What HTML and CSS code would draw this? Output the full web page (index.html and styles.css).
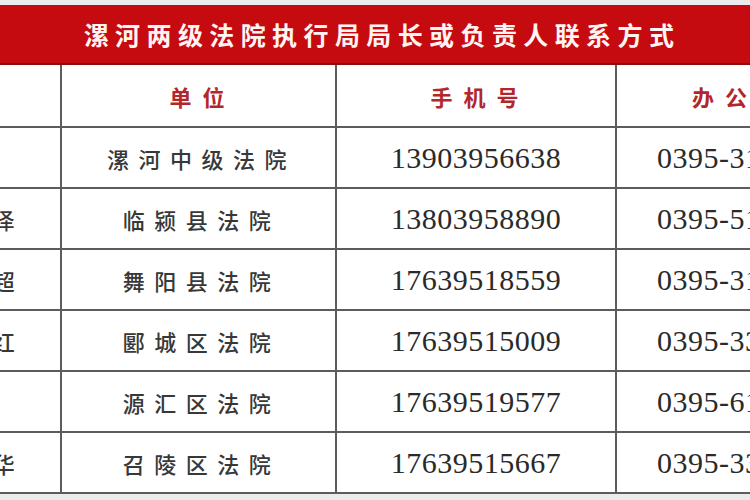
FILE: index.html
```html
<!DOCTYPE html>
<html lang="zh-CN">
<head>
<meta charset="utf-8">
<title>漯河两级法院执行局局长或负责人联系方式</title>
<link rel="stylesheet" href="styles.css">
</head>
<body>
<div class="page">
  <div class="banner">漯河两级法院执行局局长或负责人联系方式</div>
  <div class="sheet">
    <table class="grid">
      <colgroup>
        <col class="c-name">
        <col class="c-unit">
        <col class="c-mobile">
        <col class="c-office">
      </colgroup>
      <thead>
        <tr>
          <th>姓名</th>
          <th>单位</th>
          <th>手机号</th>
          <th>办公电话</th>
        </tr>
      </thead>
      <tbody>
        <tr><td class="cn">王伟</td><td class="cn">漯河中级法院</td><td class="num">13903956638</td><td class="num">0395-3116621</td></tr>
        <tr><td class="cn">李春泽</td><td class="cn">临颍县法院</td><td class="num">13803958890</td><td class="num">0395-5120021</td></tr>
        <tr><td class="cn">刘国超</td><td class="cn">舞阳县法院</td><td class="num">17639518559</td><td class="num">0395-3186502</td></tr>
        <tr><td class="cn">张振红</td><td class="cn">郾城区法院</td><td class="num">17639515009</td><td class="num">0395-3379618</td></tr>
        <tr><td class="cn">陈刚</td><td class="cn">源汇区法院</td><td class="num">17639519577</td><td class="num">0395-6168016</td></tr>
        <tr><td class="cn">赵建华</td><td class="cn">召陵区法院</td><td class="num">17639515667</td><td class="num">0395-3375522</td></tr>
      </tbody>
    </table>
  </div>
</div>
</body>
</html>
```

FILE: styles.css
```css
html, body {
  margin: 0;
  padding: 0;
}

body {
  background: #ebebeb;
  width: 750px;
  height: 500px;
  overflow: hidden;
  font-family: "Noto Sans CJK SC", "Noto Sans", sans-serif;
}

.page {
  padding-top: 5px;
}

.banner {
  height: 58px;
  background: #c50a10;
  border-bottom: 2px solid #8e0b0d;
  color: #fff4f2;
  font-family: "Noto Sans CJK SC", sans-serif;
  font-weight: 700;
  font-size: 25px;
  letter-spacing: 6.4px;
  line-height: 58px;
  text-align: center;
  padding-left: 14px;
}

.sheet {
  width: 750px;
  overflow: hidden;
  background: #ffffff;
}

.grid {
  margin-left: -114px;
  table-layout: fixed;
  border-collapse: collapse;
  width: 1029px;
}

.c-name { width: 174px; }
.c-unit { width: 275px; }
.c-mobile { width: 280px; }
.c-office { width: 300px; }

.grid th,
.grid td {
  border: 2px solid #5c5c5c;
  text-align: center;
  padding: 0;
  white-space: nowrap;
}

.grid thead tr {
  height: 62px;
}

.grid thead th {
  border-top: none;
  color: #b3262a;
  font-family: "Noto Sans CJK SC", sans-serif;
  font-weight: 700;
  font-size: 22px;
  letter-spacing: 11px;
  padding-left: 8px;
}

.grid tbody tr {
  height: 61px;
}

.grid td.cn {
  color: #383838;
  font-family: "Noto Sans CJK SC", sans-serif;
  font-weight: 500;
  font-size: 22px;
  letter-spacing: 9.5px;
  padding-left: 6px;
}

.grid td.num {
  color: #2a2a2a;
  font-family: "Liberation Serif", "Times New Roman", serif;
  font-size: 30px;
  letter-spacing: 0.5px;
}

.grid td.num:last-child {
  text-align: left;
  padding-left: 40px;
}

.grid th:last-child {
  text-align: left;
  padding-left: 75px;
}
```
